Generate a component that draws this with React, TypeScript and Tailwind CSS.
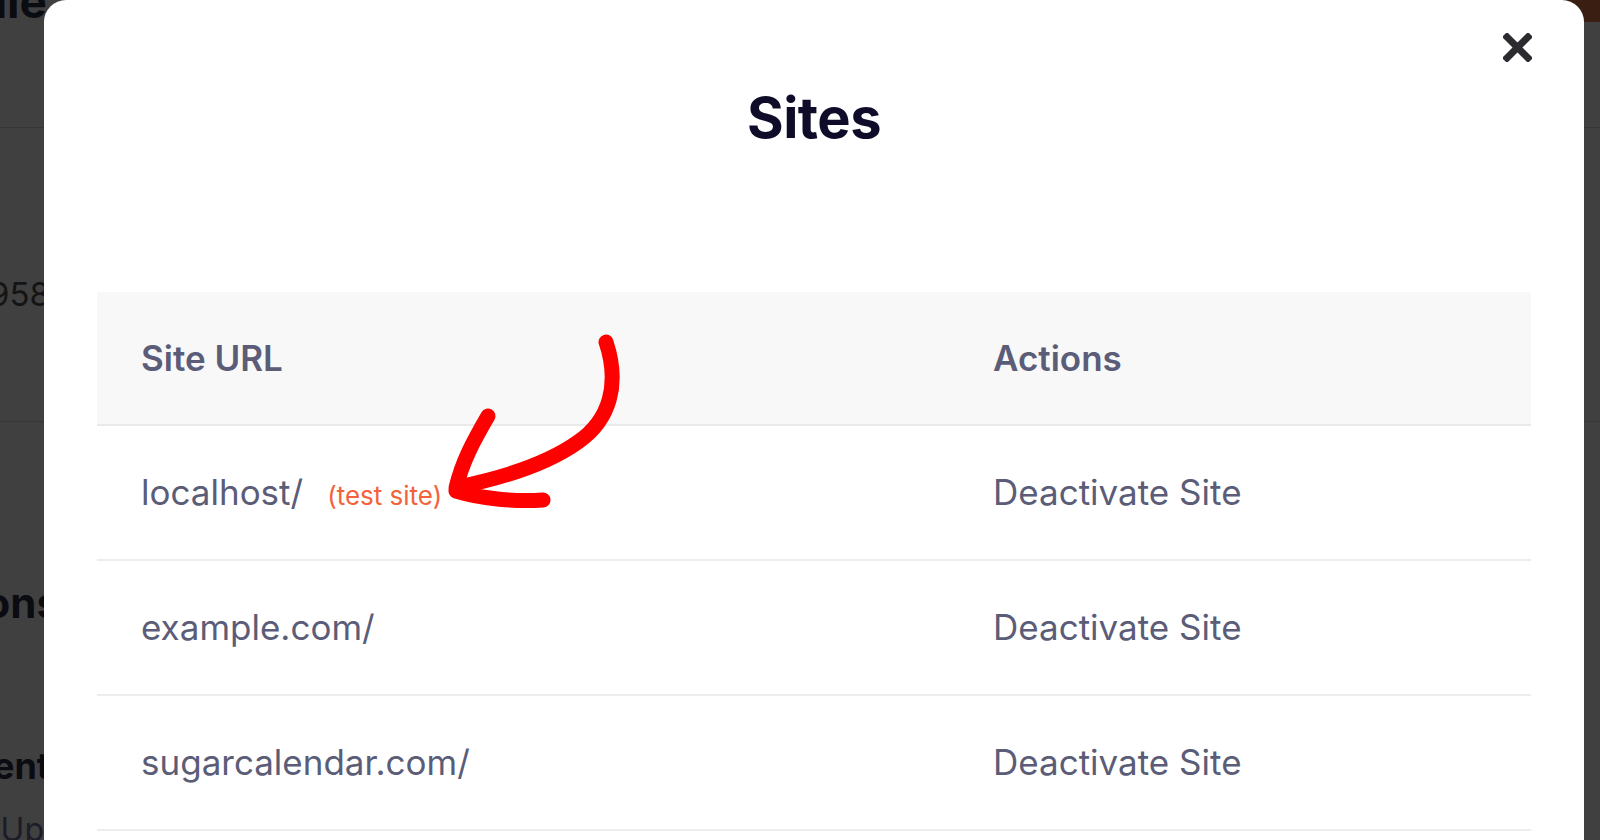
import React from "react";

const sites = [
  { url: "localhost/", test: true },
  { url: "example.com/", test: false },
  { url: "sugarcalendar.com/", test: false },
];

function CloseIcon() {
  return (
    <svg viewBox="0 0 29 29" className="w-[29px] h-[29px]">
      <path d="M4 4 L25 25 M25 4 L4 25" stroke="#2b2b30" strokeWidth="7" strokeLinecap="square" fill="none" />
    </svg>
  );
}

function Arrow() {
  return (
    <svg
      className="absolute left-0 top-0 pointer-events-none"
      width="1600"
      height="840"
      viewBox="0 0 1600 840"
    >
      <g stroke="#ff0000" strokeWidth="15" strokeLinecap="round" strokeLinejoin="round" fill="none">
        <path d="M606 342 C620 384, 610 420, 578 442 C550 462, 507 477, 458 487" />
        <path d="M488 416 C474 440, 462 462, 456 488" />
        <path d="M456 491 C482 499, 517 502, 543 500" />
      </g>
    </svg>
  );
}

export default function App() {
  return (
    <div
      className="relative w-[1600px] h-[840px] overflow-hidden bg-[#404040]"
      style={{ fontFamily: "Inter, 'Noto Sans', sans-serif" }}
    >
      {/* dimmed page behind the dialog */}
      <div className="flex flex-col text-[#0b0b12]">
        <div className="h-[128px] border-b border-[#373737] flex justify-between items-start">
          <div className="w-[47px] flex justify-end whitespace-nowrap -mt-[22px] text-[46px] font-bold leading-none">
            Profile
          </div>
          <div className="w-[40px] h-[22px] bg-[#3a1e12]" />
        </div>
        <div className="h-[294px] border-b border-[#373737]">
          <div className="w-[50px] flex justify-end whitespace-nowrap mt-[150px] text-[33px] leading-none text-[#141414]">
            41958
          </div>
        </div>
        <div className="flex flex-col">
          <div className="w-[60px] flex justify-end whitespace-nowrap mt-[160px] text-[42px] font-bold leading-none">
            Add-ons
          </div>
          <div className="w-[50px] flex justify-end whitespace-nowrap mt-[124px] text-[36px] font-bold leading-none">
            Payment
          </div>
          <div className="w-[44px] flex justify-end whitespace-nowrap mt-[30px] text-[32px] leading-none text-[#1c1c28]">
            Install Up
          </div>
        </div>
      </div>

      {/* dialog */}
      <div className="absolute left-[44px] top-0 w-[1540px] h-[900px] bg-white rounded-[22px] px-[53px] pt-[90px]">
        <button className="absolute top-[33px] right-[52px]">
          <CloseIcon />
        </button>
        <h2 className="text-center text-[56px] font-bold leading-none text-[#0f0c29] tracking-[-0.5px]">Sites</h2>

        <div className="mt-[146px] text-[#5b5d78]">
          <div className="h-[134px] bg-[#f8f8f8] border-b-2 border-[#e9e9e9] flex items-center text-[35px] font-semibold leading-none">
            <div className="w-[852px] pl-[44px]">Site URL</div>
            <div className="pl-[44px]">Actions</div>
          </div>
          {sites.map((s) => (
            <div key={s.url} className="h-[135px] border-b-2 border-[#ededed] flex items-center text-[35px] leading-none">
              <div className="w-[852px] pl-[44px] flex items-baseline">
                <span>{s.url}</span>
                {s.test && <span className="ml-[24px] text-[26px] text-[#f2623d]">(test site)</span>}
              </div>
              <div className="pl-[44px]">Deactivate Site</div>
            </div>
          ))}
        </div>
      </div>

      <Arrow />
    </div>
  );
}
